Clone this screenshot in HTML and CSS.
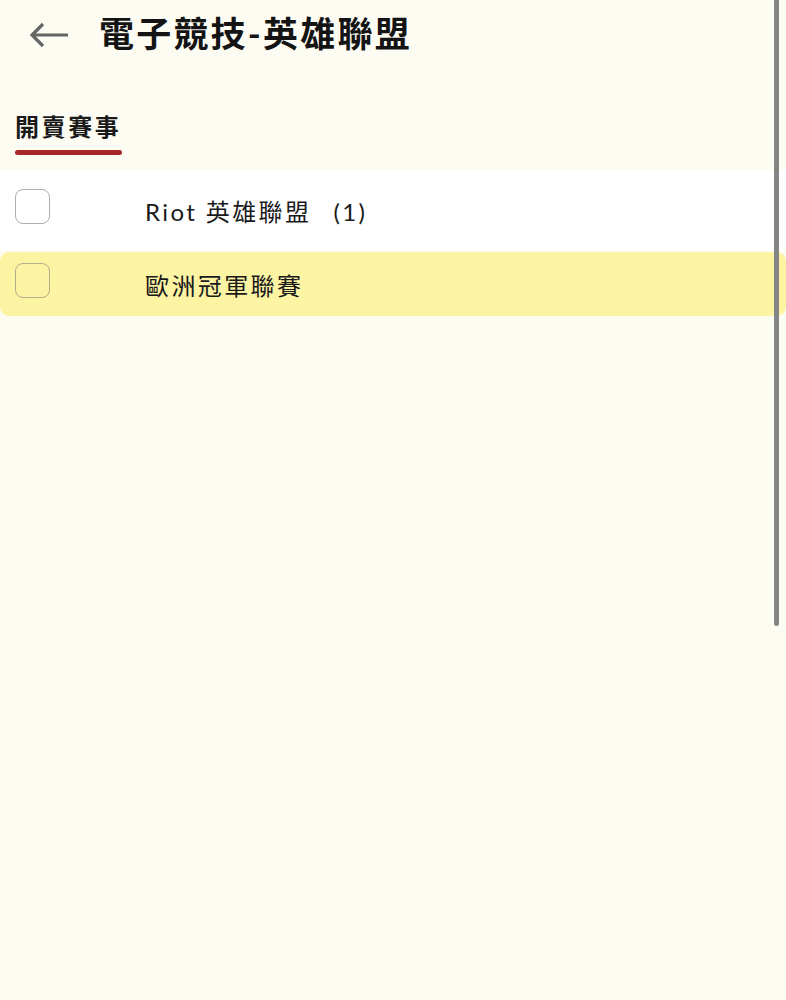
FILE: index.html
```html
<!DOCTYPE html>
<html lang="zh-Hant">
<head>
    <meta charset="UTF-8">
    <meta name="viewport" content="width=device-width, initial-scale=1.0">
    <title>電子競技-英雄聯盟</title>
    <link rel="stylesheet" href="styles.css">
</head>
<body>

    <!-- 標題列 -->
    <div class="header">
        <button class="back-btn" aria-label="返回">
            <svg width="40" height="28" viewBox="0 0 40 28">
                <path d="M39 14 H3 M14 3 L3 14 L14 25" fill="none" stroke="#666" stroke-width="3.2" stroke-linecap="butt" stroke-linejoin="miter"/>
            </svg>
        </button>
        <h1>電子競技-英雄聯盟</h1>
    </div>

    <!-- 分頁 -->
    <div class="tabs">
        <div class="tab active">開賣賽事</div>
    </div>

    <!-- 賽事列表 -->
    <div class="list">
        <label class="row">
            <span class="check"></span>
            <span class="name">Riot 英雄聯盟<span class="count">(1)</span></span>
        </label>
        <label class="row highlight">
            <span class="check"></span>
            <span class="name">歐洲冠軍聯賽</span>
        </label>
    </div>

    <div class="scroll-thumb"></div>

</body>
</html>
```

FILE: styles.css
```css
body {
    margin: 0;
    background-color: #fdfcf3;
    font-family: Lato, "Noto Sans CJK TC", sans-serif;
    color: #1a1a1a;
    min-height: 1000px;
}
.header {
    display: flex;
    align-items: center;
    height: 70px;
    padding-left: 29px;
}
.back-btn {
    border: none;
    background: none;
    padding: 0;
    width: 40px;
    height: 28px;
    margin-right: 30px;
    cursor: pointer;
}
.back-btn svg {
    display: block;
}
.header h1 {
    margin: 0 0 4px;
    font-size: 35px;
    line-height: 40px;
    font-weight: bold;
    letter-spacing: 2.2px;
    color: #141414;
}
.tabs {
    display: flex;
    padding: 38px 15px 0;
}
.tab {
    font-size: 24px;
    font-weight: bold;
    line-height: 38px;
    letter-spacing: 2.6px;
    padding-bottom: 4px;
    position: relative;
}
.tab.active::after {
    content: "";
    position: absolute;
    left: 0;
    right: -1px;
    bottom: -5px;
    height: 5px;
    border-radius: 3px;
    background-color: #a8282a;
}
.list {
    margin-top: 20px;
}
.row {
    display: flex;
    align-items: center;
    height: 80px;
    padding-left: 15px;
    box-sizing: border-box;
    background-color: #ffffff;
}
.row.highlight {
    height: 64px;
    margin-top: 2px;
    background-color: #fcf3a3;
    border-radius: 9px;
}
.check {
    width: 33px;
    height: 33px;
    margin-bottom: 8px;
    border: 1.5px solid #adadad;
    border-radius: 8px;
    background-color: #ffffff;
    flex-shrink: 0;
}
.row.highlight .check {
    background-color: transparent;
    border-color: #b3ae8a;
}
.name {
    margin-left: 95px;
    font-size: 24px;
    letter-spacing: 2.4px;
}
.count {
    margin-left: 22px;
}
.scroll-thumb {
    position: fixed;
    top: 0;
    right: 7px;
    width: 5px;
    height: 626px;
    background-color: #858585;
    border-radius: 0 0 3px 3px;
}
```
